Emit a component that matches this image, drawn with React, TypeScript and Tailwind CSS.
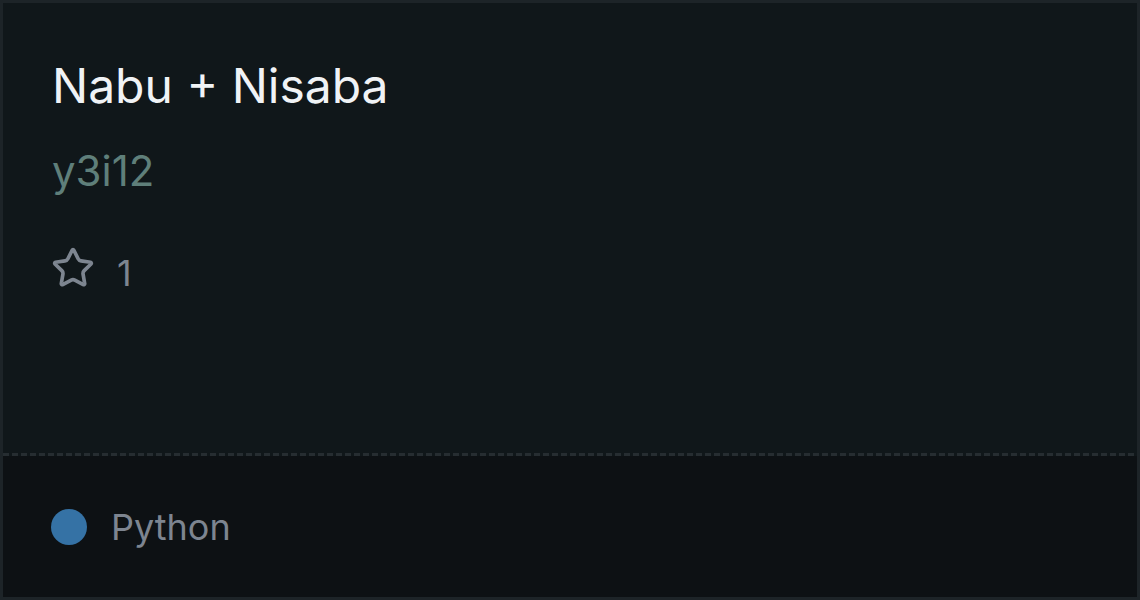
import { Star } from 'lucide-react';

export default function App() {
  return (
    <div className="w-[1140px] h-[600px] bg-[#0d1114]" style={{ fontFamily: 'Inter, "Noto Sans", sans-serif' }}>
      <div className="flex flex-col h-full border-[3px] border-[#1d2428] overflow-hidden">
        <div className="flex-1 bg-[#10171a] px-[49px] pt-[54px]">
          <h1 className="text-[48px] leading-[58px] text-[#f0f3f6] font-normal">Nabu + Nisaba</h1>
          <p className="mt-[30px] text-[42px] leading-[51px] text-[#5f7f7a]">y3i12</p>
          <div className="mt-[50px] flex items-start gap-[22px] text-[#7d8590]">
            <Star size={44} strokeWidth={2} className="-ml-[1px]" />
            <span className="mt-[3px] text-[36px] leading-[48px]">1</span>
          </div>
        </div>
        <div className="h-[3px] bg-[repeating-linear-gradient(90deg,#262d31_0_6px,transparent_6px_9px)] bg-[#10171a]" />
        <div className="h-[141px] flex items-center gap-[24px] px-[48px] bg-[#0d1114]">
          <span className="w-[36px] h-[36px] rounded-full bg-[#3572a5]" />
          <span className="text-[36px] leading-[44px] text-[#7d8590]">Python</span>
        </div>
      </div>
    </div>
  );
}
